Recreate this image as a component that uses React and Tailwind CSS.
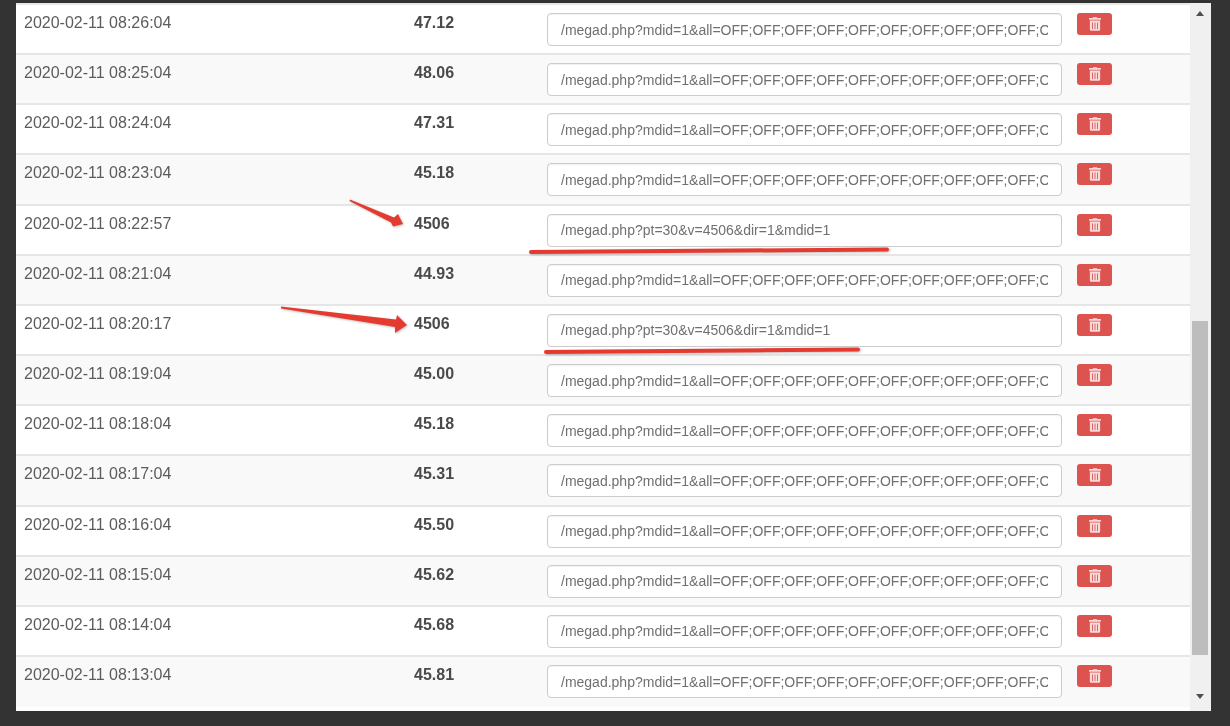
import { FaTrashAlt } from "react-icons/fa";

const ALL = "/megad.php?mdid=1&all=OFF;OFF;OFF;OFF;OFF;OFF;OFF;OFF;OFF;OFF;OFF;OFF;OFF;OFF";
const PT = "/megad.php?pt=30&v=4506&dir=1&mdid=1";

const rows = [
  ["2020-02-11 08:26:04", "47.12", ALL],
  ["2020-02-11 08:25:04", "48.06", ALL],
  ["2020-02-11 08:24:04", "47.31", ALL],
  ["2020-02-11 08:23:04", "45.18", ALL],
  ["2020-02-11 08:22:57", "4506", PT],
  ["2020-02-11 08:21:04", "44.93", ALL],
  ["2020-02-11 08:20:17", "4506", PT],
  ["2020-02-11 08:19:04", "45.00", ALL],
  ["2020-02-11 08:18:04", "45.18", ALL],
  ["2020-02-11 08:17:04", "45.31", ALL],
  ["2020-02-11 08:16:04", "45.50", ALL],
  ["2020-02-11 08:15:04", "45.62", ALL],
  ["2020-02-11 08:14:04", "45.68", ALL],
  ["2020-02-11 08:13:04", "45.81", ALL],
];

function Row({ row, index }) {
  return (
    <div
      className={`grid grid-cols-[390px_133px_531px_1fr] h-[50.17px] border-b-2 border-[#e6e6e6] last:border-b-0 ${
        index % 2 === 1 ? "bg-[#f9f9f9]" : "bg-white"
      }`}
    >
      <div className="pl-2 pt-[6px] text-[16px] leading-[23px] text-[#5c5c5c]">{row[0]}</div>
      <div className="pl-2 pt-[6px] text-[16px] leading-[23px] font-bold text-[#4a4a4a]">{row[1]}</div>
      <div className="pl-2 pt-[8px]">
        <input
          readOnly
          value={row[2]}
          className="block w-[515px] h-[33px] px-[13px] text-[14px] text-[#707070] bg-white border border-[#cccccc] rounded-[4px] shadow-[inset_0_1px_1px_rgba(0,0,0,0.06)] outline-none"
        />
      </div>
      <div className="pl-[7px] pt-[8px]">
        <button className="flex items-center justify-center w-[35px] h-[22px] bg-[#dc5350] rounded-[3px] text-[#f8dcdb]">
          <FaTrashAlt className="w-[12px] h-[14px]" />
        </button>
      </div>
    </div>
  );
}

function Scrollbar() {
  return (
    <div className="w-[21px] shrink-0 bg-[#f0f0f0] flex flex-col items-center">
      <div className="mt-[8px] w-0 h-0 border-x-[4.5px] border-x-transparent border-b-[5px] border-b-[#505050] mr-[1px]" />
      <div className="mt-[305px] w-[16px] h-[334px] bg-[#bdbdbd] mr-[1px]" />
      <div className="mt-[39px] w-0 h-0 border-x-[4.5px] border-x-transparent border-t-[5px] border-t-[#505050] mr-[1px]" />
    </div>
  );
}

// red marks drawn over the screenshot
function Annotations() {
  return (
    <svg
      className="absolute left-0 top-0 pointer-events-none drop-shadow-[1px_1px_1px_rgba(0,0,0,0.25)]"
      width="1230"
      height="726"
      viewBox="0 0 1230 726"
    >
      <path d="M350 199.5 L394 217.5 L398 214 L403 224 L393 226.5 L391 222.5 L349.5 201 Z" fill="#e53a30" />
      <path d="M281 306.5 L396 319.5 L397 315 L407 325 L395 333 L395 327 L281 308.5 Z" fill="#e53a30" />
      <path d="M531 252 Q 700 250.5 887 249.5" stroke="#e53a30" strokeWidth="4" strokeLinecap="round" fill="none" />
      <path d="M546 352 Q 700 351 858 349.5" stroke="#e53a30" strokeWidth="4" strokeLinecap="round" fill="none" />
    </svg>
  );
}

export default function App() {
  return (
    <div
      className="relative h-[726px] overflow-hidden bg-[#333333] pt-[3px] pl-[16px] pr-[19px] pb-[15px]"
      style={{ fontFamily: '"Liberation Sans", Arial, sans-serif' }}
    >
      <div className="flex h-full bg-white blur-[0.35px]">
        <div className="flex-1 min-w-0 overflow-hidden">
          <div className="h-[2px] bg-[#e8e8e8]" />
          {rows.map((row, i) => (
            <Row key={i} row={row} index={i} />
          ))}
        </div>
        <Scrollbar />
      </div>
      <Annotations />
    </div>
  );
}
